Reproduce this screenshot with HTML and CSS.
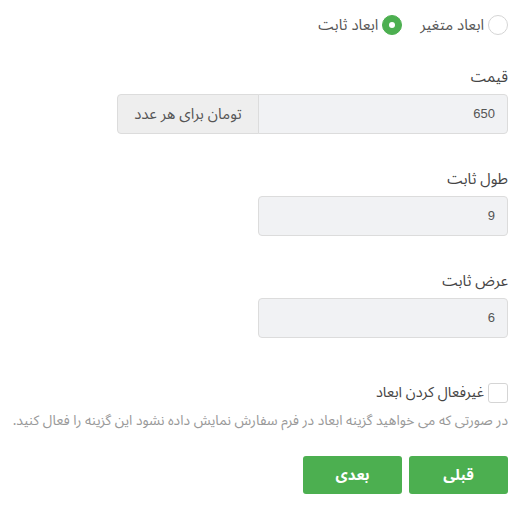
FILE: index.html
```html
<!DOCTYPE html>
<html lang="fa" dir="rtl">
<head>
<meta charset="utf-8">
<link rel="stylesheet" href="styles.css">
</head>
<body>
<div class="form">
  <div class="radios">
    <label class="radio"><span class="circle"></span><span>ابعاد متغیر</span></label>
    <label class="radio"><span class="circle on"></span><span>ابعاد ثابت</span></label>
  </div>

  <div class="field first">
    <div class="label">قیمت</div>
    <div class="group">
      <div class="input joined">650</div>
      <div class="addon">تومان برای هر عدد</div>
    </div>
  </div>

  <div class="field">
    <div class="label">طول ثابت</div>
    <div class="input single">9</div>
  </div>

  <div class="field">
    <div class="label">عرض ثابت</div>
    <div class="input single">6</div>
  </div>

  <label class="check"><span class="box"></span><span class="check-text">غیرفعال کردن ابعاد</span></label>
  <div class="help">در صورتی که می خواهید گزینه ابعاد در فرم سفارش نمایش داده نشود این گزینه را فعال کنید.</div>

  <div class="buttons">
    <button class="btn">قبلی</button>
    <button class="btn">بعدی</button>
  </div>
</div>
</body>
</html>
```
FILE: styles.css
```css
body {
  margin: 8px;
  font-family: "Noto Sans Arabic", "DejaVu Sans", sans-serif;
  color: #444;
  font-size: 15px;
  line-height: 20px;
  background: #fff;
}
.form {
  width: 500px;
}
.radios {
  display: flex;
  gap: 18px;
  padding-top: 7px;
  height: 20px;
  align-items: center;
}
.radio {
  display: flex;
  align-items: center;
  gap: 4px;
  color: #555;
}
.circle {
  width: 18px;
  height: 18px;
  border: 1px solid #d5d5d5;
  border-radius: 50%;
  background: #fff;
  position: relative;
}
.circle.on {
  background: #4caf50;
  border-color: #4caf50;
}
.circle.on::after {
  content: "";
  position: absolute;
  left: 6px;
  top: 6px;
  width: 6px;
  height: 6px;
  border-radius: 50%;
  background: #fff;
}
.field {
  margin-top: 35px;
}
.field.first {
  margin-top: 32px;
}
.label {
  line-height: 20px;
  margin-bottom: 7px;
  color: #444;
}
.group {
  display: flex;
  width: 391px;
}
.input {
  box-sizing: border-box;
  height: 40px;
  background: #f1f2f4;
  border: 1px solid #dcdcdc;
  border-radius: 4px;
  display: flex;
  align-items: center;
  padding: 0 12px;
  font-family: "Liberation Sans", sans-serif;
  font-size: 13px;
  color: #555;
}
.input.single {
  width: 250px;
}
.input.joined {
  flex: 1;
  border-radius: 0 4px 4px 0;
}
.addon {
  box-sizing: border-box;
  width: 142px;
  height: 40px;
  background: #eeeeee;
  border: 1px solid #dcdcdc;
  margin-right: -1px;
  border-radius: 4px 0 0 4px;
  display: flex;
  align-items: center;
  justify-content: center;
  font-size: 15px;
  color: #555;
}
.check {
  display: flex;
  align-items: center;
  gap: 4px;
  margin-top: 45px;
  height: 20px;
}
.check-text {
  font-size: 14.5px;
}
.box {
  box-sizing: border-box;
  width: 20px;
  height: 20px;
  border: 1px solid #d5d5d5;
  border-radius: 3px;
  background: #fff;
}
.help {
  margin-top: 9px;
  font-size: 13.8px;
  color: #999;
  line-height: 18px;
  white-space: nowrap;
}
.buttons {
  display: flex;
  gap: 7px;
  margin-top: 26px;
}
.btn {
  width: 99px;
  height: 38px;
  border: none;
  border-radius: 3px;
  background: #4caf50;
  color: #fff;
  font-family: "Noto Sans Arabic", sans-serif;
  font-weight: bold;
  font-size: 15px;
  padding: 0;
}
```
